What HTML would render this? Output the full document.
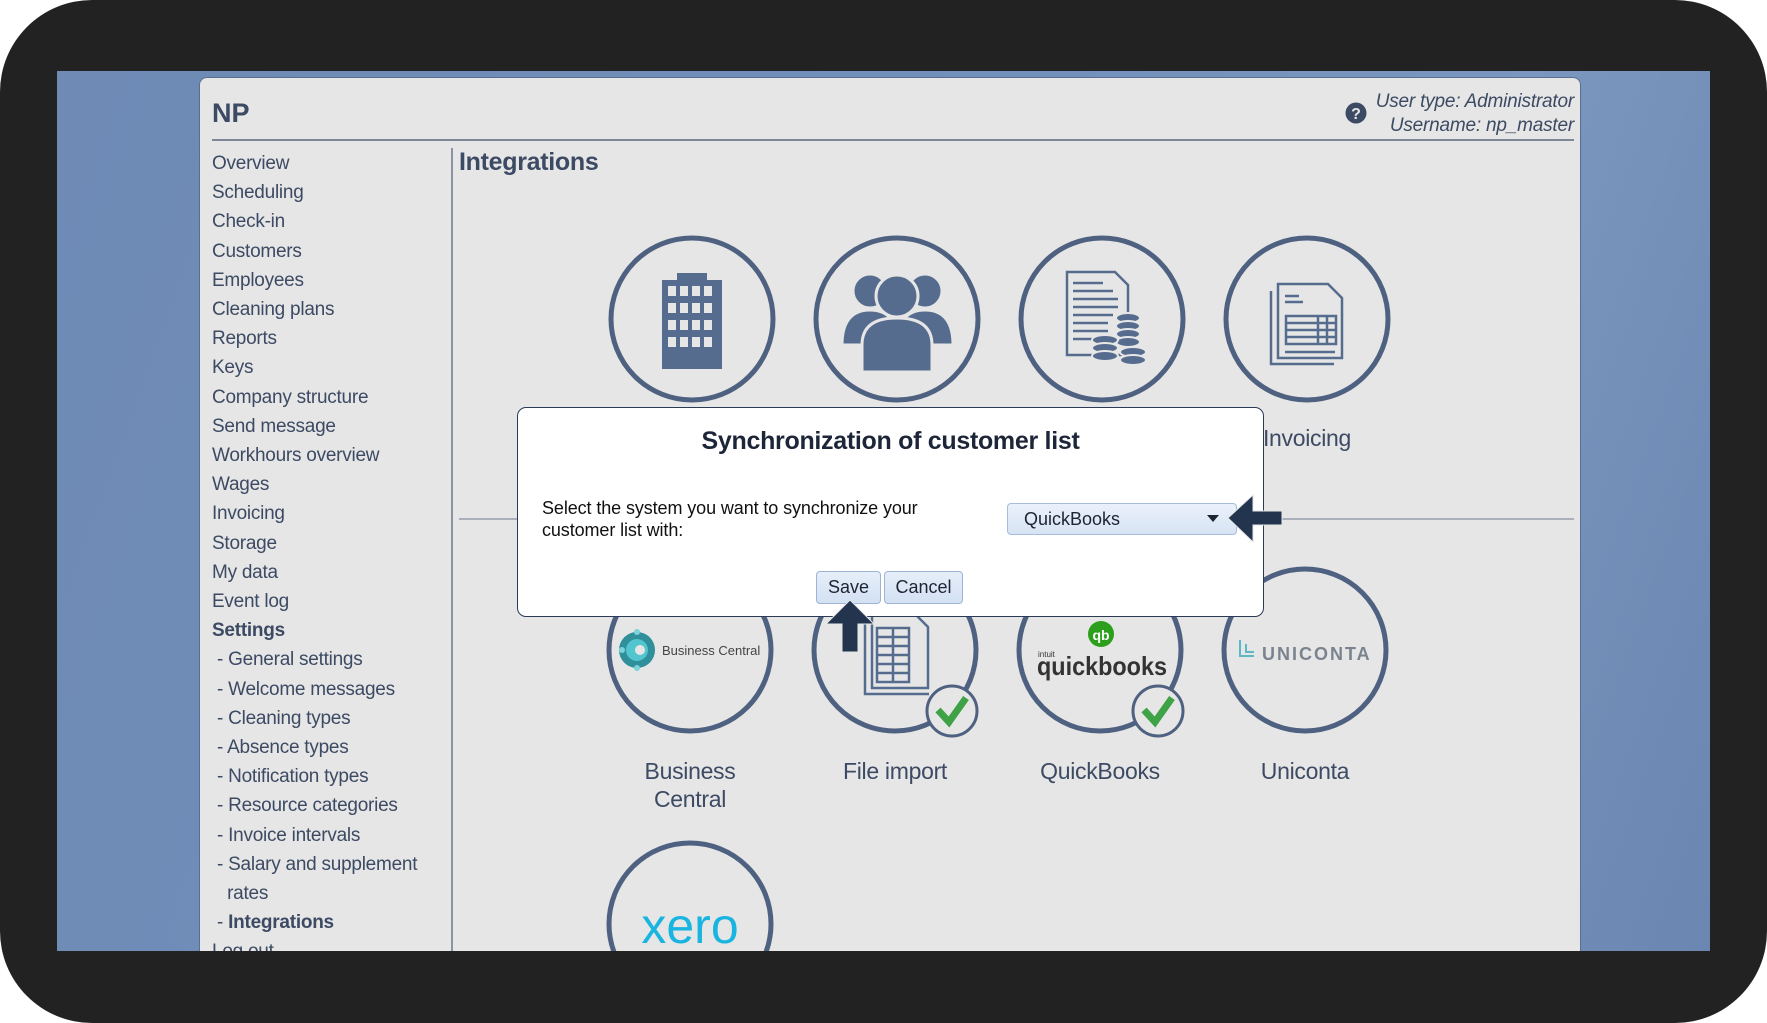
<!DOCTYPE html>
<html><head><meta charset="utf-8"><style>
*{margin:0;padding:0;box-sizing:border-box}
body{width:1767px;height:1023px;background:#fff;overflow:hidden;position:relative;font-family:"Liberation Sans",Arial,sans-serif}
.frame{position:absolute;left:0;top:0;width:1767px;height:1023px;background:#232223;border-radius:92px}
.screen{position:absolute;left:57px;top:71px;width:1653px;height:880px;background:linear-gradient(110deg,#6e8ab5 0%,#7190bb 50%,#7b97bf 75%,#6a86b1 100%);overflow:hidden}
.panel{position:absolute;left:199px;top:77px;width:1382px;height:874px;background:#e6e6e6;border-radius:8px 8px 0 0;border:1px solid #5a6f90;border-bottom:none}
.abs{position:absolute}
.np{left:212px;top:98px;font-size:27px;font-weight:bold;color:#3c4a63}
.hline{height:2px;background:#7d8797}
.user{right:193px;top:90px;text-align:right;font-style:italic;font-size:19px;line-height:24px;color:#3c4a63;letter-spacing:-0.2px}
.nav{left:212px;top:149px;font-size:19px;color:#3c4a63;line-height:29.2px;letter-spacing:-0.25px}
.nav b{font-weight:bold}
.title{left:459px;top:148px;font-size:25px;font-weight:bold;color:#3c4a63;letter-spacing:-0.3px}
.lbl{font-size:23px;color:#3c4a63;text-align:center;width:220px;line-height:28px;letter-spacing:-0.3px}
.modal{left:517px;top:407px;width:747px;height:210px;background:#fff;border:1.5px solid #2b3a55;border-radius:9px}
.btn{top:571px;height:33px;background:linear-gradient(#e6eef9,#d3e1f3);border:1px solid #9db4d6;border-radius:4px;font-size:18px;color:#1d2433;text-align:center;line-height:31px}
</style></head><body>
<div class="frame"></div>
<div class="screen"></div>
<div class="panel"></div>
<div class="abs np">NP</div>
<div class="abs hline" style="left:212px;top:139px;width:1362px"></div>
<svg class="abs" style="left:1345px;top:102px" width="22" height="22" viewBox="0 0 22 22"><circle cx="11" cy="11" r="10.5" fill="#3c4a63"/><text x="11" y="17" font-family="Liberation Sans" font-weight="bold" font-size="16" fill="#e6e6e6" text-anchor="middle">?</text></svg>
<div class="abs user">User type: Administrator<br>Username: np_master</div>
<div class="abs nav">Overview<br>Scheduling<br>Check-in<br>Customers<br>Employees<br>Cleaning plans<br>Reports<br>Keys<br>Company structure<br>Send message<br>Workhours overview<br>Wages<br>Invoicing<br>Storage<br>My data<br>Event log<br><b>Settings</b><br>&nbsp;- General settings<br>&nbsp;- Welcome messages<br>&nbsp;- Cleaning types<br>&nbsp;- Absence types<br>&nbsp;- Notification types<br>&nbsp;- Resource categories<br>&nbsp;- Invoice intervals<br>&nbsp;- Salary and supplement<br>&nbsp;&nbsp;&nbsp;rates<br>&nbsp;- <b>Integrations</b><br>Log out</div>
<div class="abs" style="left:57px;top:951px;width:1653px;height:40px;background:#232223"></div>
<div class="abs" style="left:451px;top:148px;width:1.5px;height:803px;background:#8a93a2"></div>
<div class="abs title">Integrations</div>
<div class="abs" style="left:459px;top:518px;width:1115px;height:1.5px;background:#a9b0bb"></div>

<svg class="abs" style="left:0;top:0" width="1767" height="951" viewBox="0 0 1767 951">
<g fill="none" stroke="#4f6180" stroke-width="5">
<circle cx="692" cy="319" r="81"/><circle cx="897" cy="319" r="81"/><circle cx="1102" cy="319" r="81"/><circle cx="1307" cy="319" r="81"/>
<circle cx="690" cy="650" r="81"/><circle cx="895" cy="650" r="81"/><circle cx="1100" cy="650" r="81"/><circle cx="1305" cy="650" r="81"/>
<circle cx="690" cy="924" r="81"/>
</g>
<g fill="#566c8e"><rect x="662" y="280" width="60" height="89"/><rect x="677" y="273" width="30" height="8"/></g>
<g fill="#e6e6e6">
<rect x="668" y="286" width="8" height="10"/><rect x="680" y="286" width="8" height="10"/><rect x="692" y="286" width="8" height="10"/><rect x="704" y="286" width="8" height="10"/>
<rect x="668" y="303" width="8" height="10"/><rect x="680" y="303" width="8" height="10"/><rect x="692" y="303" width="8" height="10"/><rect x="704" y="303" width="8" height="10"/>
<rect x="668" y="320" width="8" height="10"/><rect x="680" y="320" width="8" height="10"/><rect x="692" y="320" width="8" height="10"/><rect x="704" y="320" width="8" height="10"/>
<rect x="668" y="337" width="8" height="10"/><rect x="680" y="337" width="8" height="10"/><rect x="692" y="337" width="8" height="10"/><rect x="704" y="337" width="8" height="10"/>
</g>
<g fill="#566c8e" stroke="#e6e6e6" stroke-width="3">
<circle cx="870" cy="291" r="17"/><circle cx="925" cy="291" r="17"/>
<path d="M842 345 Q842 310 870 310 Q898 310 898 345Z"/><path d="M897 345 Q897 310 925 310 Q953 310 953 345Z"/>
<circle cx="897" cy="296" r="21"/>
<path d="M862 372 L862 345 Q862 318 897 318 Q932 318 932 345 L932 372 Z"/>
</g>
<g fill="none" stroke="#566c8e" stroke-width="2.5">
<path d="M1067 272 L1115 272 L1128 285 L1128 355 L1067 355Z"/>
<path d="M1073 283 h30 M1073 291 h40 M1073 299 h45 M1073 307 h45 M1073 315 h40 M1073 323 h35 M1073 331 h35 M1073 339 h30"/>
</g>
<g fill="#566c8e" stroke="#e6e6e6" stroke-width="2">
<ellipse cx="1128" cy="318" rx="12" ry="5"/><ellipse cx="1128" cy="326" rx="12" ry="5"/><ellipse cx="1128" cy="334" rx="12" ry="5"/><ellipse cx="1128" cy="342" rx="12" ry="5"/>
<ellipse cx="1105" cy="340" rx="13" ry="5"/><ellipse cx="1105" cy="348" rx="13" ry="5"/><ellipse cx="1105" cy="356" rx="13" ry="5"/>
<ellipse cx="1133" cy="352" rx="13" ry="5"/><ellipse cx="1133" cy="360" rx="13" ry="5"/>
</g>
<g fill="none" stroke="#566c8e" stroke-width="2.5">
<path d="M1271 291 L1271 364 L1334 364"/>
<path d="M1278 284 L1328 284 L1342 298 L1342 358 L1278 358Z"/>
<path d="M1285 296 h14 M1285 302 h18 M1286 316 h50 v28 h-50z M1286 323 h50 M1286 330 h50 M1286 337 h50 M1318 316 v28 M1327 316 v28 M1285 352 h50"/>
</g>
<circle cx="637" cy="650" r="18" fill="#2f8f9a"/><circle cx="637" cy="650" r="11" fill="#52c5cf"/><circle cx="640" cy="650" r="5" fill="#e6e6e6"/>
<circle cx="622" cy="650" r="3" fill="#7bd3da"/><circle cx="637" cy="632" r="3" fill="#7bd3da"/><circle cx="637" cy="668" r="3" fill="#7bd3da"/>
<text x="662" y="655" font-family="Liberation Sans" font-size="13" fill="#444">Business Central</text>
<g fill="none" stroke="#566c8e" stroke-width="2.5">
<path d="M865 622 L865 694 L929 694"/>
<path d="M872 614 L915 614 L928 627 L928 688 L872 688Z"/>
<path d="M877 628 h32 v54 h-32z M877 637 h32 M877 646 h32 M877 655 h32 M877 664 h32 M877 673 h32 M893 628 v54"/>
</g>
<circle cx="952" cy="711" r="25" fill="#e6e6e6" stroke="#4f6180" stroke-width="3"/>
<path d="M938 710 L949 722 L966 698" fill="none" stroke="#3fa246" stroke-width="7"/>
<circle cx="1101" cy="634" r="13" fill="#2ca01c"/>
<text x="1101" y="640" font-family="Liberation Sans" font-weight="bold" font-size="14" fill="#fff" text-anchor="middle">qb</text>
<text x="1038" y="657" font-family="Liberation Sans" font-size="8" fill="#333">intuit</text>
<text x="1037" y="675" font-family="Liberation Sans" font-weight="bold" font-size="26" fill="#333" textLength="130" lengthAdjust="spacingAndGlyphs">quickbooks</text>
<circle cx="1158" cy="711" r="25" fill="#e6e6e6" stroke="#4f6180" stroke-width="3"/>
<path d="M1144 710 L1155 722 L1172 698" fill="none" stroke="#3fa246" stroke-width="7"/>
<path d="M1240 640 v16 h14 M1246 644 v8 h8" fill="none" stroke="#5cb8c4" stroke-width="2"/>
<text x="1262" y="660" font-family="Liberation Sans" font-weight="bold" font-size="18" fill="#7a838f" letter-spacing="2">UNICONTA</text>
<text x="690" y="943" font-family="Liberation Sans" font-size="50" fill="#19b5e0" text-anchor="middle">xero</text>
</svg>

<div class="abs lbl" style="left:1197px;top:424px">Invoicing</div>
<div class="abs lbl" style="left:580px;top:757px">Business<br>Central</div>
<div class="abs lbl" style="left:785px;top:757px">File import</div>
<div class="abs lbl" style="left:990px;top:757px">QuickBooks</div>
<div class="abs lbl" style="left:1195px;top:757px">Uniconta</div>

<div class="abs modal"></div>
<div class="abs" style="left:517px;top:427px;width:747px;text-align:center;font-size:25px;font-weight:bold;color:#1d2638;letter-spacing:-0.3px">Synchronization of customer list</div>
<div class="abs" style="left:542px;top:497px;font-size:18px;line-height:22px;color:#111;letter-spacing:-0.1px">Select the system you want to synchronize your<br>customer list with:</div>
<div class="abs" style="left:1007px;top:503px;width:230px;height:32px;background:linear-gradient(#eaf1fb,#d7e4f4);border:1px solid #a7bcdc;border-radius:4px;font-size:18px;line-height:30px;padding-left:16px;color:#1d2433">QuickBooks</div>
<svg class="abs" style="left:1206px;top:513px" width="14" height="10"><path d="M1 2 L13 2 L7 9Z" fill="#1d2433"/></svg>
<div class="abs btn" style="left:816px;width:65px">Save</div>
<div class="abs btn" style="left:884px;width:79px">Cancel</div>
<svg class="abs" style="left:0;top:0" width="1767" height="951" viewBox="0 0 1767 951">
<path d="M1228 518 L1253 495 L1253 511 L1282 511 L1282 525 L1253 525 L1253 542Z" fill="#23344f" stroke="#e6e6e6" stroke-width="1"/>
<path d="M850 600 L874 624 L858 624 L858 652 L842 652 L842 624 L826 624Z" fill="#23344f" stroke="#e6e6e6" stroke-width="1"/>
</svg>
</body></html>
